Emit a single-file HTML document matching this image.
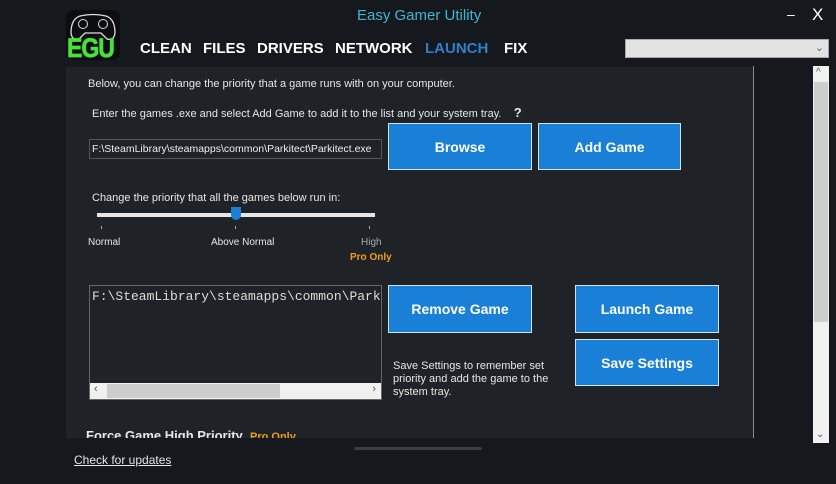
<!DOCTYPE html>
<html><head><style>
body{margin:0;width:836px;height:484px;background:#15181c;position:relative;overflow:hidden;font-family:"Liberation Sans",sans-serif;color:#e8e8e8}
.a{position:absolute}
.nav{font-weight:bold;font-size:15px;color:#fff;top:40px}
.btn{position:absolute;background:#1a7fd6;border:1px solid #cfe3f5;color:#fff;font-weight:bold;font-size:14px;display:flex;align-items:center;justify-content:center;box-sizing:border-box}
.t{font-size:11px;color:#e6e6e6;position:absolute;white-space:nowrap}
</style></head><body>
<div class="a" style="left:66px;top:67px;width:687px;height:371px;background:#1f2327"></div>
<div class="a" style="left:753px;top:66px;width:1px;height:372px;background:#8a8d90"></div>
<!-- logo -->
<div class="a" style="left:66px;top:10px;width:54px;height:50px;background:#0c0d0e;border-radius:8px"></div>
<svg class="a" style="left:68px;top:11px" width="50" height="32" viewBox="0 0 50 32"><path d="M12 5 Q25 2 38 5 Q47 8 47 22 Q46 30 39 28 L33 22 H17 L11 28 Q4 30 3 22 Q3 8 12 5Z" fill="none" stroke="#ddd" stroke-width="1.3"/><circle cx="15" cy="13" r="4.5" fill="none" stroke="#ddd"/><circle cx="35" cy="13" r="4.5" fill="none" stroke="#ddd"/></svg>
<div class="a" style="left:67px;top:33px;font:900 23px 'Liberation Sans',sans-serif;color:#47e23b;letter-spacing:-1px;transform:scaleY(1.15);transform-origin:top;-webkit-text-stroke:0.6px #47e23b">EGU</div>
<div class="a" style="left:357px;top:7px;font-size:15px;color:#3fb6d6">Easy Gamer Utility</div>
<div class="a" style="left:787px;top:6px;font-size:14px;color:#fff">–</div>
<div class="a" style="left:812px;top:5px;font-size:17px;color:#fff">X</div>
<div class="a nav" style="left:140px">CLEAN</div>
<div class="a nav" style="left:203px">FILES</div>
<div class="a nav" style="left:257px">DRIVERS</div>
<div class="a nav" style="left:335px">NETWORK</div>
<div class="a nav" style="left:425px;color:#2f7fcf">LAUNCH</div>
<div class="a nav" style="left:504px">FIX</div>
<div class="a" style="left:625px;top:39px;width:204px;height:19px;background:#e3e3e3;border:1px solid #aaa;box-sizing:border-box"><span style="position:absolute;right:4px;top:1px;font-size:11px;color:#666">⌄</span></div>
<!-- scrollbar -->
<div class="a" style="left:813px;top:66px;width:16px;height:377px;background:#f0f0f0"></div>
<div class="a" style="left:814px;top:82px;width:14px;height:240px;background:#cdcdcd"></div>
<div class="a" style="left:816px;top:67px;font-size:10px;color:#555">^</div>
<div class="a" style="left:816px;top:429px;font-size:10px;color:#555">⌄</div>

<div class="t" style="left:88px;top:78px">Below, you can change the priority that a game runs with on your computer.</div>
<div class="t" style="left:92px;top:105px">Enter the games .exe and select Add Game to add it to the list and your system tray.&nbsp;&nbsp;&nbsp; <b style="font-size:13px">?</b></div>
<div class="a" style="left:89px;top:139px;width:293px;height:20px;border:1px solid #555;box-sizing:border-box;font-size:10.5px;color:#eee;padding:3px 0 0 2px;white-space:nowrap;overflow:hidden">F:\SteamLibrary\steamapps\common\Parkitect\Parkitect.exe</div>
<div class="btn" style="left:388px;top:123px;width:144px;height:47px">Browse</div>
<div class="btn" style="left:538px;top:123px;width:143px;height:47px">Add Game</div>
<div class="t" style="left:92px;top:192px">Change the priority that all the games below run in:</div>
<div class="a" style="left:97px;top:213px;width:278px;height:4px;background:#e6e6e6"></div>
<div class="a" style="left:231px;top:207px;width:10px;height:13px;background:#1a7fd6;border-radius:0 0 5px 5px"></div>
<div class="a" style="left:101px;top:226px;width:1px;height:3px;background:#aaa"></div>
<div class="a" style="left:235px;top:226px;width:1px;height:3px;background:#aaa"></div>
<div class="a" style="left:369px;top:226px;width:1px;height:3px;background:#aaa"></div>
<div class="t" style="left:88px;top:237px;font-size:10px">Normal</div>
<div class="t" style="left:211px;top:237px;font-size:10px">Above Normal</div>
<div class="t" style="left:361px;top:237px;font-size:10px;color:#aaa">High</div>
<div class="t" style="left:350px;top:252px;font-size:10px;color:#f29a1c;font-weight:bold">Pro Only</div>
<div class="a" style="left:89px;top:285px;width:293px;height:115px;border:1px solid #666;box-sizing:border-box;background:#1f2327;overflow:hidden">
<div style="font:13px 'Liberation Mono',monospace;color:#ddd;padding:3px 0 0 2px;white-space:nowrap">F:\SteamLibrary\steamapps\common\Parkitect</div>
<div style="position:absolute;left:0;bottom:0;width:100%;height:16px;background:#f0f0f0"><div style="position:absolute;left:17px;top:1px;width:173px;height:14px;background:#cdcdcd"></div><span style="position:absolute;left:4px;top:0;font-size:11px;color:#555">‹</span><span style="position:absolute;right:5px;top:0;font-size:11px;color:#555">›</span></div></div>
<div class="btn" style="left:388px;top:285px;width:144px;height:48px">Remove Game</div>
<div class="btn" style="left:575px;top:285px;width:144px;height:48px">Launch Game</div>
<div class="btn" style="left:575px;top:339px;width:144px;height:47px">Save Settings</div>
<div class="t" style="left:393px;top:360px;line-height:13px">Save Settings to remember set<br>priority and add the game to the<br>system tray.</div>
<div class="a" style="left:86px;top:428px;width:340px;height:10px;overflow:hidden"><div style="font-weight:bold;font-size:13px;white-space:nowrap">Force Game High Priority&nbsp;&nbsp;<span style="color:#f29a1c;font-size:11px">Pro Only</span></div></div>
<div class="a" style="left:354px;top:447px;width:128px;height:3px;background:#3a3d41;border-radius:2px"></div>
<div class="a" style="left:74px;top:453px;font-size:12px;color:#e6e6e6;text-decoration:underline">Check for updates</div>
</body></html>
